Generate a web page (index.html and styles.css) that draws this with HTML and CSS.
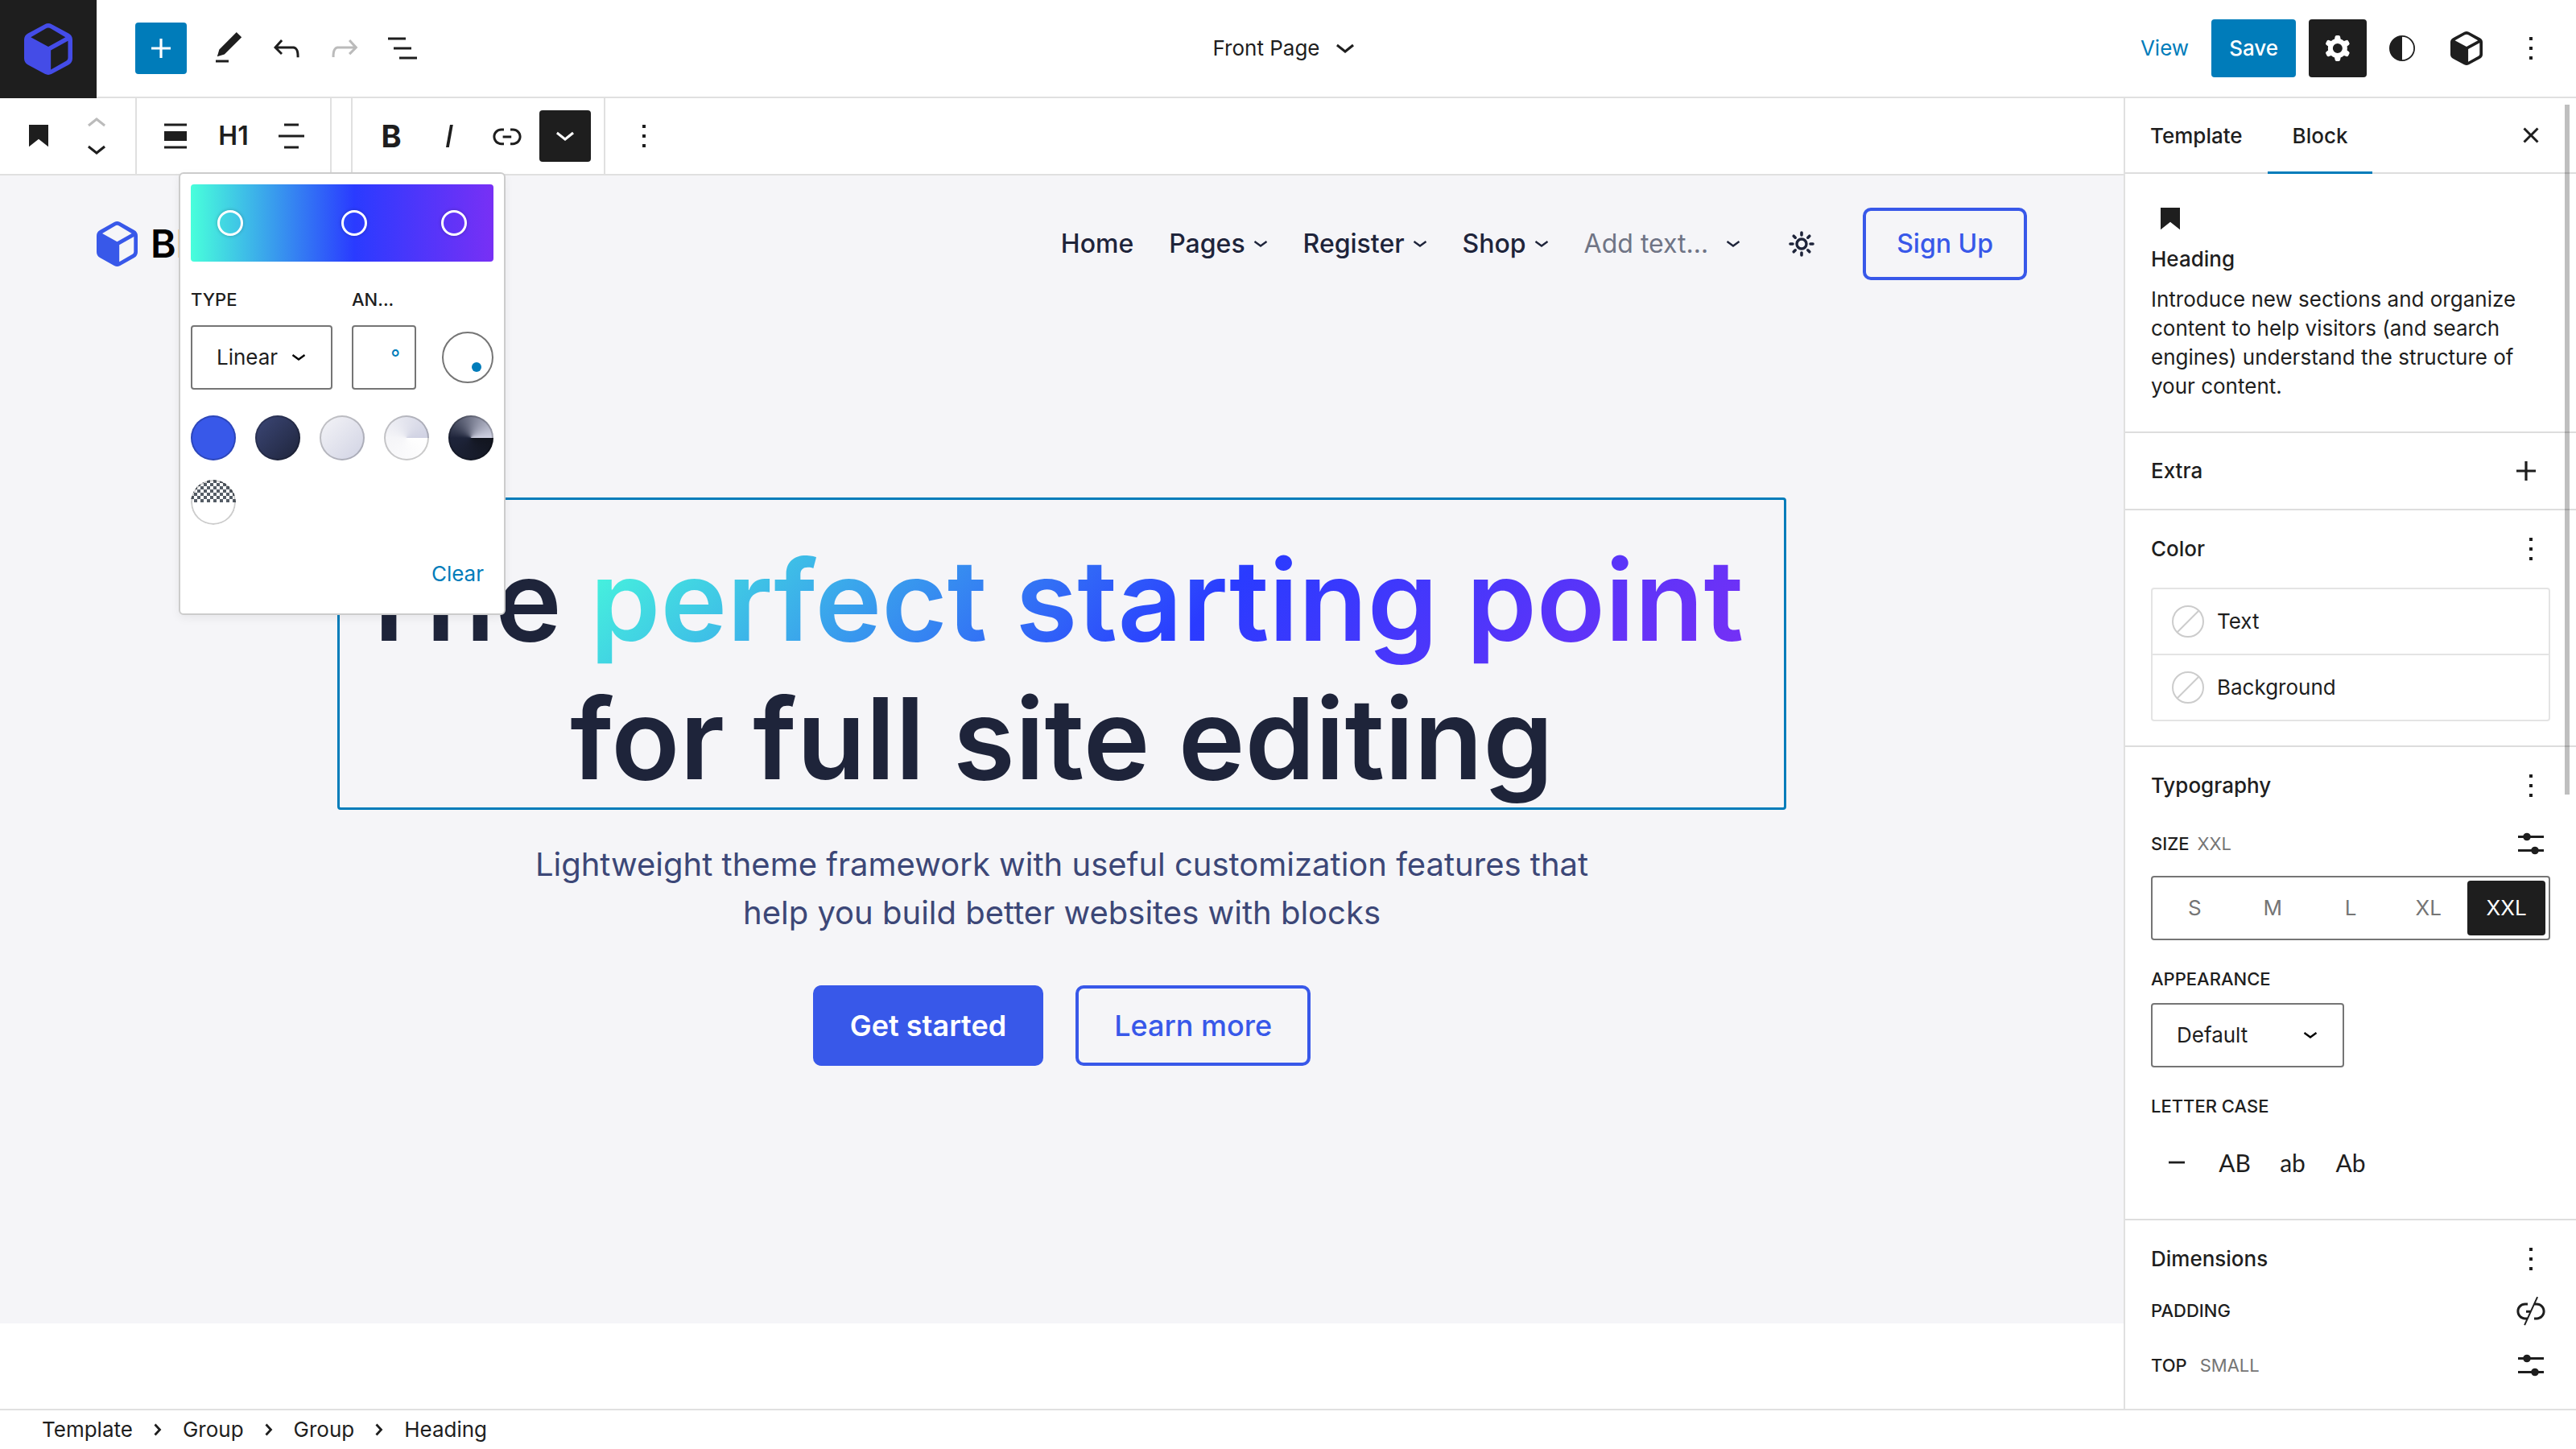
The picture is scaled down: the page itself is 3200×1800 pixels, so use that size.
FILE: index.html
```html
<!DOCTYPE html>
<html lang="en">
<head>
<meta charset="utf-8">
<meta name="viewport" content="width=device-width, initial-scale=1">
<title>Front Page – Editor</title>
<link rel="stylesheet" href="styles.css">
</head>
<body>
<svg class="sprite" aria-hidden="true">
  <symbol id="cube" viewBox="0 0 152 168" preserveAspectRatio="none"><path fill-rule="evenodd" d="M65 3Q76-3 87 3L140 33Q152 40 152 54V114Q152 128 140 135L87 165Q76 171 65 165L12 135Q0 128 0 114V54Q0 40 12 33ZM21 45L76 76L130 45L84 17Q76 12 68 17ZM84 88V151L133 122Q138 119 138 113V57Z"/></symbol>
  <symbol id="plus" viewBox="0 0 24 24"><path d="M18 11.2h-5.2V6h-1.6v5.2H6v1.6h5.2V18h1.6v-5.2H18z"/></symbol>
  <symbol id="pencil" viewBox="0 0 24 24"><path d="M20.1 5.1L16.9 2 6.2 12.7l-1.3 4.4 4.5-1.3L20.1 5.1zM4 20.8h8v-1.5H4v1.5z"/></symbol>
  <symbol id="undo" viewBox="0 0 24 24"><path d="M18.3 11.7c-.6-.6-1.4-.9-2.3-.9H6.7l2.9-3.3-1.1-1-4.5 5L8.5 16l1-1-2.7-2.7H16c.5 0 .9.2 1.3.5 1 1 1 3.4 1 4.5v.3h1.5v-.2c0-1.5 0-4.3-1.5-5.7z"/></symbol>
  <symbol id="redo" viewBox="0 0 24 24"><path d="M15.6 6.5l-1.1 1 2.9 3.3H8c-.9 0-1.7.3-2.3.9-1.4 1.5-1.4 4.2-1.4 5.6v.2h1.5v-.3c0-1.1 0-3.5 1-4.5.3-.3.7-.5 1.3-.5h9.2L14.5 15l1.1 1.1 4.6-4.6-4.6-5z"/></symbol>
  <symbol id="list" viewBox="0 0 24 24"><path d="M3 5.2h11v1.6H3zM6.500 11.200h11v1.600h-11zM10 17.200h11v1.600H10z"/></symbol>
  <symbol id="bookmark" viewBox="0 0 24 24"><path d="M6 5v13.600l6-4.700 6 4.700V5z"/></symbol>
  <symbol id="down" viewBox="0 0 22 12"><path d="M22 3.200L11 12 0 3.200 1.800.8 11 8 20 .8z"/></symbol>
  <symbol id="up" viewBox="0 0 22 12"><path d="M0 8.800L11 0l11 8.800-1.800 2.400L11 4 2 11.200z"/></symbol>
  <symbol id="align" viewBox="0 0 24 24"><path d="M5 4.200h14v1.600H5zM5 9h14v6H5zM5 18.200h14v1.600H5z"/></symbol>
  <symbol id="center" viewBox="0 0 24 24"><path d="M7.500 4.200h9v1.600h-9zM4 11.200h16v1.600H4zM7.500 18.200h9v1.600h-9z"/></symbol>
  <symbol id="slant" viewBox="0 0 24 24"><path d="M12.500 5L10 19h1.900l2.500-14z"/></symbol>
  <symbol id="link" viewBox="0 0 24 24"><path d="M15.600 7.200H14v1.500h1.600c2 0 3.700 1.700 3.700 3.700s-1.700 3.700-3.700 3.700H14v1.500h1.600c2.800 0 5.200-2.300 5.200-5.200 0-2.900-2.300-5.200-5.200-5.200zM4.700 12.400c0-2 1.700-3.700 3.700-3.700H10V7.200H8.400c-2.900 0-5.200 2.300-5.200 5.200 0 2.900 2.300 5.200 5.200 5.200H10v-1.500H8.400c-2 0-3.700-1.700-3.700-3.700zm4.600.9h5.300v-1.500H9.300v1.500z"/></symbol>
  <symbol id="unlink" viewBox="0 0 24 24"><path d="M15.600 7.300h-.7l1.600-3.500-.9-.4-3.900 8.500H9v1.500h2l-1.300 2.800H8.400c-2 0-3.700-1.700-3.700-3.700s1.700-3.700 3.700-3.700H10V7.300H8.400c-2.900 0-5.200 2.300-5.200 5.200 0 2.900 2.300 5.200 5.200 5.200H9l-1.400 3.200.9.400 5.700-12.500h1.400c2 0 3.700 1.700 3.700 3.700s-1.700 3.700-3.700 3.700H14v1.500h1.600c2.900 0 5.200-2.300 5.200-5.200 0-2.900-2.400-5.200-5.200-5.200z"/></symbol>
  <symbol id="more" viewBox="0 0 24 24"><path d="M13 19h-2v-2h2v2zm0-6h-2v-2h2v2zm0-6h-2V5h2v2z"/></symbol>
  <symbol id="cog" viewBox="0 0 24 24"><path fill-rule="evenodd" d="M10.289 4.836A1 1 0 0111.275 4h1.306a1 1 0 01.987.836l.244 1.466c.787.26 1.503.679 2.108 1.218l1.393-.522a1 1 0 011.216.437l.653 1.130a1 1 0 01-.23 1.273l-1.148.944a6.025 6.025 0 010 2.435l1.149.946a1 1 0 01.23 1.272l-.653 1.130a1 1 0 01-1.216.437l-1.394-.522c-.605.540-1.320.958-2.108 1.218l-.244 1.466a1 1 0 01-.987.836h-1.306a1 1 0 01-.986-.836l-.244-1.466a5.995 5.995 0 01-2.108-1.218l-1.394.522a1 1 0 01-1.217-.436l-.653-1.131a1 1 0 01.23-1.272l1.149-.946a6.026 6.026 0 010-2.435l-1.148-.944a1 1 0 01-.23-1.272l.653-1.131a1 1 0 011.217-.437l1.393.522a5.994 5.994 0 012.108-1.218l.244-1.466zM14.929 12a3 3 0 11-6 0 3 3 0 016 0z"/></symbol>
  <symbol id="contrast" viewBox="0 0 24 24"><path fill-rule="evenodd" d="M12 4a8 8 0 100 16 8 8 0 000-16zm0 .9a7.100 7.100 0 010 14.200z"/></symbol>
  <symbol id="close" viewBox="0 0 24 24"><path d="M12 13.060l3.712 3.713 1.061-1.060L13.061 12l3.712-3.712-1.060-1.060L12 10.938 8.288 7.227l-1.061 1.060L10.939 12l-3.712 3.712 1.060 1.061L12 13.061z"/></symbol>
  <symbol id="sliders" viewBox="0 0 24 24"><path d="M4 7h16v1.500H4zM4 15.500h16V17H4z"/><circle cx="9.500" cy="7.750" r="2.400"/><circle cx="14.500" cy="16.250" r="2.400"/></symbol>
  <symbol id="dash" viewBox="0 0 24 24"><path d="M7 11.300h10v1.400H7z"/></symbol>
  <symbol id="caret" viewBox="0 0 18 10"><path d="M1.500 2l7.500 5.500L16.500 2" fill="none" stroke="currentColor" stroke-width="2.400"/></symbol>
  <symbol id="next" viewBox="0 0 10 16"><path d="M1.500 1.500L7.500 8l-6 6.500" fill="none" stroke="currentColor" stroke-width="2.800"/></symbol>
  <symbol id="sun" viewBox="0 0 32 32"><g fill="none" stroke="currentColor"><circle cx="16" cy="16" r="6" stroke-width="3.400"/><path stroke-width="3.600" stroke-linecap="round" d="M16 2v3M16 27v3M2 16h3M27 16h3M6.200 6.200l2 2M23.800 23.800l2 2M6.200 25.800l2-2M23.800 8.200l2-2"/></g></symbol>
</svg>

<header class="topbar">
  <a class="home-link" href="#" aria-label="Back to dashboard"><svg><use href="#cube"/></svg></a>
  <div class="top-tools">
    <button class="inserter" aria-label="Add block"><svg class="icon"><use href="#plus"/></svg></button>
    <div class="top-actions">
      <button class="tool" aria-label="Tools"><svg class="icon"><use href="#pencil"/></svg></button>
      <button class="tool" aria-label="Undo"><svg class="icon"><use href="#undo"/></svg></button>
      <button class="tool muted" aria-label="Redo"><svg class="icon"><use href="#redo"/></svg></button>
      <button class="tool" aria-label="List view"><svg class="icon"><use href="#list"/></svg></button>
    </div>
  </div>
  <button class="doc-title">Front Page <svg class="chev"><use href="#down"/></svg></button>
  <div class="top-settings">
    <a class="view" href="#">View</a>
    <button class="save">Save</button>
    <div class="setting-icons">
      <button class="setting active" aria-label="Settings"><svg class="icon"><use href="#cog"/></svg></button>
      <button class="setting" aria-label="Styles"><svg class="icon"><use href="#contrast"/></svg></button>
      <button class="setting" aria-label="Blockify"><svg class="cube-small"><use href="#cube"/></svg></button>
      <button class="setting" aria-label="Options"><svg class="icon"><use href="#more"/></svg></button>
    </div>
  </div>
</header>

<div class="body">
  <main class="editor">
    <div class="toolbar">
      <div class="group">
        <button class="cell" aria-label="Heading"><svg class="icon"><use href="#bookmark"/></svg></button>
        <div class="movers">
          <button class="muted" aria-label="Move up"><svg class="chev"><use href="#up"/></svg></button>
          <button aria-label="Move down"><svg class="chev"><use href="#down"/></svg></button>
        </div>
      </div>
      <div class="group">
        <button class="cell" aria-label="Align"><svg class="icon"><use href="#align"/></svg></button>
        <button class="cell level">H1</button>
        <button class="cell" aria-label="Align text"><svg class="icon"><use href="#center"/></svg></button>
      </div>
      <div class="group spacer"></div>
      <div class="group">
        <button class="cell bold">B</button>
        <button class="cell" aria-label="Italic"><svg class="icon"><use href="#slant"/></svg></button>
        <button class="cell" aria-label="Link"><svg class="icon"><use href="#link"/></svg></button>
        <button class="cell" aria-label="More formatting"><span class="pressed"><svg class="chev"><use href="#down"/></svg></span></button>
      </div>
      <div class="group last">
        <button class="cell" aria-label="Options"><svg class="icon"><use href="#more"/></svg></button>
      </div>
    </div>

    <div class="canvas">
      <div class="site-header">
        <a class="brand" href="#"><svg><use href="#cube"/></svg>Blockify</a>
        <nav class="nav">
          <a href="#">Home</a>
          <a href="#">Pages<svg class="caret"><use href="#caret"/></svg></a>
          <a href="#">Register<svg class="caret"><use href="#caret"/></svg></a>
          <a href="#">Shop<svg class="caret"><use href="#caret"/></svg></a>
          <a class="placeholder" href="#">Add text…<svg class="caret"><use href="#caret"/></svg></a>
        </nav>
        <button class="mode" aria-label="Toggle dark mode"><svg><use href="#sun"/></svg></button>
        <a class="signup" href="#">Sign Up</a>
      </div>
      <section class="hero">
        <h1>The <span class="gradient-text">perfect starting point</span> for full site editing</h1>
        <p>Lightweight theme framework with useful customization features that help you build better websites with blocks</p>
        <div class="cta">
          <a class="primary" href="#">Get started</a>
          <a class="outline" href="#">Learn more</a>
        </div>
      </section>
    </div>

    <div class="popover" role="dialog" aria-label="Gradient">
      <div class="gradient-bar">
        <button class="stop" style="left:13%" aria-label="Stop 13%"></button>
        <button class="stop" style="left:54%" aria-label="Stop 54%"></button>
        <button class="stop" style="left:87%" aria-label="Stop 87%"></button>
      </div>
      <div class="gradient-fields">
        <label class="label" for="gtype">TYPE</label>
        <label class="label angle-label" for="gangle">AN...</label>
        <div class="select">
          <select id="gtype"><option>Linear</option></select>
          <svg class="caret"><use href="#caret"/></svg>
        </div>
        <div class="angle"><input id="gangle" type="text"><span>°</span></div>
        <button class="dial" aria-label="Angle"><span></span></button>
      </div>
      <div class="swatches">
        <button class="swatch s1" aria-label="Blue"></button>
        <button class="swatch s2" aria-label="Navy"></button>
        <button class="swatch s3" aria-label="Light"></button>
        <button class="swatch s4" aria-label="Light cone"></button>
        <button class="swatch s5" aria-label="Dark cone"></button>
        <button class="swatch s6" aria-label="Transparent"></button>
      </div>
      <button class="clear">Clear</button>
    </div>
  </main>

  <aside class="sidebar">
    <div class="tabs">
      <button class="tab">Template</button>
      <button class="tab current">Block</button>
      <button class="icon-btn close" aria-label="Close"><svg class="icon"><use href="#close"/></svg></button>
    </div>
    <section class="card">
      <svg class="icon"><use href="#bookmark"/></svg>
      <h2>Heading</h2>
      <p>Introduce new sections and organize content to help visitors (and search engines) understand the structure of your content.</p>
    </section>
    <section class="panel">
      <button class="panel-toggle">Extra <svg class="icon"><use href="#plus"/></svg></button>
    </section>
    <section class="panel color">
      <div class="panel-head"><h2>Color</h2><button class="icon-btn" aria-label="Color options"><svg class="icon"><use href="#more"/></svg></button></div>
      <div class="color-list">
        <button><svg class="none" viewBox="0 0 40 40"><circle cx="20" cy="20" r="19"/><path d="M6.500 33.500l27-27"/></svg>Text</button>
        <button><svg class="none" viewBox="0 0 40 40"><circle cx="20" cy="20" r="19"/><path d="M6.500 33.500l27-27"/></svg>Background</button>
      </div>
    </section>
    <section class="panel typography">
      <div class="panel-head"><h2>Typography</h2><button class="icon-btn" aria-label="Typography options"><svg class="icon"><use href="#more"/></svg></button></div>
      <div class="row size-row"><span class="label">SIZE <span class="hint">XXL</span></span><button class="icon-btn" aria-label="Custom size"><svg class="icon"><use href="#sliders"/></svg></button></div>
      <div class="segmented">
        <button>S</button><button>M</button><button>L</button><button>XL</button><button class="on">XXL</button>
      </div>
      <div class="field">
        <label class="label" for="appearance">APPEARANCE</label>
        <div class="select wide">
          <select id="appearance"><option>Default</option></select>
          <svg class="caret"><use href="#caret"/></svg>
        </div>
      </div>
      <div class="field">
        <span class="label">LETTER CASE</span>
        <div class="cases">
          <button aria-label="None"><svg class="icon"><use href="#dash"/></svg></button>
          <button>AB</button>
          <button>ab</button>
          <button>Ab</button>
        </div>
      </div>
    </section>
    <section class="panel dimensions">
      <div class="panel-head"><h2>Dimensions</h2><button class="icon-btn" aria-label="Dimensions options"><svg class="icon"><use href="#more"/></svg></button></div>
      <div class="row"><span class="label">PADDING</span><button class="icon-btn" aria-label="Unlink sides"><svg class="icon"><use href="#unlink"/></svg></button></div>
      <div class="row"><span class="label spaced">TOP <span class="hint">SMALL</span></span><button class="icon-btn" aria-label="Custom padding"><svg class="icon"><use href="#sliders"/></svg></button></div>
    </section>
    <div class="scroll-thumb"></div>
  </aside>
</div>

<footer class="breadcrumb">
  <a href="#">Template</a><svg><use href="#next"/></svg>
  <a href="#">Group</a><svg><use href="#next"/></svg>
  <a href="#">Group</a><svg><use href="#next"/></svg>
  <a href="#">Heading</a>
</footer>
</body>
</html>
```
FILE: styles.css
```css
:root {
  --ink: #1e1e1e;
  --admin: #007cba;
  --line: #e0e0e0;
  --gray: #757575;
  --navy: #1e243a;
  --blue: #3858e9;
}

* { box-sizing: border-box; }

body {
  margin: 0;
  height: 100vh;
  display: flex;
  flex-direction: column;
  background: #fff;
  color: var(--ink);
  font: 400 26px/36px Inter, sans-serif;
}

h1, h2, p { margin: 0; }
a { color: inherit; text-decoration: none; }

button {
  margin: 0;
  padding: 0;
  border: 0;
  background: none;
  color: inherit;
  font: inherit;
  display: flex;
  align-items: center;
  justify-content: center;
}

svg { display: block; flex: none; fill: currentColor; }
.sprite { position: absolute; width: 0; height: 0; }
.icon { width: 48px; height: 48px; }
.chev { width: 22px; height: 12px; }
.caret { width: 18px; height: 10px; }
.muted { color: #bbb; }

/* Top bar */
.topbar {
  display: grid;
  grid-template-columns: auto 1fr auto 1fr;
  align-items: center;
  height: 122px;
  flex: none;
  position: relative;
  border-bottom: 2px solid var(--line);
}
.home-link {
  width: 120px;
  height: 122px;
  margin-bottom: -2px;
  display: grid;
  place-items: center;
  background: var(--ink);
  color: #444ce7;
}
.home-link svg { width: 60px; height: 64px; }
.top-tools { display: flex; align-items: center; gap: 20px; padding-left: 48px; }
.top-actions { display: flex; gap: 8px; }
.tool, .inserter { width: 64px; height: 64px; border-radius: 4px; }
.inserter { background: var(--admin); color: #fff; }
.doc-title { gap: 20px; margin-right: 132px; }
.top-settings { display: flex; align-items: center; justify-content: flex-end; gap: 16px; padding-right: 20px; }
.view { color: var(--admin); padding: 0 12px; }
.save {
  height: 72px;
  padding: 0 22px;
  border-radius: 4px;
  background: var(--admin);
  color: #fff;
  font-weight: 500;
}
.setting-icons { display: flex; gap: 8px; }
.setting { width: 72px; height: 72px; border-radius: 4px; }
.setting.active { background: var(--ink); color: #fff; }
.cube-small { width: 40px; height: 42px; }

/* Body split */
.body { flex: 1; min-height: 0; display: flex; }
.editor { flex: 1; min-width: 0; position: relative; overflow: hidden; }

/* Block toolbar */
.toolbar { display: flex; height: 96px; border-bottom: 2px solid var(--line); }
.group { display: flex; padding: 0 12px; border-right: 2px solid var(--line); }
.group.spacer { width: 26px; padding: 0; }
.group.last { border: 0; }
.cell { width: 72px; }
.level { font-size: 32px; font-weight: 600; }
.bold { font-size: 38px; font-weight: 700; }
.movers { width: 72px; display: flex; flex-direction: column; justify-content: center; gap: 22px; }
.pressed {
  width: 64px;
  height: 64px;
  display: grid;
  place-items: center;
  border-radius: 4px;
  background: var(--ink);
  color: #fff;
}

/* Site canvas */
.canvas { background: #f5f5f8; color: var(--navy); }
.site-header { display: flex; align-items: center; gap: 60px; padding: 40px 120px; }
.brand { display: flex; align-items: center; gap: 16px; margin-right: auto; color: #000; font-size: 48px; font-weight: 600; }
.brand svg { width: 51px; height: 56px; color: var(--blue); }
.nav { display: flex; gap: 44px; font-size: 32px; font-weight: 500; }
.nav a { display: flex; align-items: center; gap: 10px; }
.nav .placeholder { gap: 22px; color: #6f7485; font-weight: 400; }
.placeholder .caret { color: var(--navy); }
.mode svg { width: 32px; height: 32px; }
.signup, .outline { border: 4px solid var(--blue); color: var(--blue); }
.signup {
  height: 90px;
  padding: 0 38px;
  display: flex;
  align-items: center;
  border-radius: 10px;
  font-size: 32px;
  font-weight: 500;
}
.hero { padding: 230px 120px 320px; text-align: center; }
/* break-spaces keeps the typed space at the line end, as the editable field does */
h1 {
  max-width: 1800px;
  margin: 0 auto 38px;
  padding: 38px 0 0;
  border: 3px solid var(--admin);
  border-radius: 4px;
  font-size: 140px;
  line-height: 172px;
  font-weight: 600;
  white-space: break-spaces;
}
.gradient-text {
  background: linear-gradient(135deg, #48ffdb 0%, #2a3bff 54%, #7830f5 100%);
  -webkit-background-clip: text;
  background-clip: text;
  color: transparent;
}
.hero p { max-width: 1360px; margin: 0 auto 60px; font-size: 40px; line-height: 60px; color: #3c4777; }
.cta { display: flex; justify-content: center; gap: 40px; font-size: 36px; font-weight: 500; }
.cta a { height: 100px; padding: 0 44px; display: flex; align-items: center; border-radius: 10px; }
.cta .primary { padding: 0 46px; background: var(--blue); color: #fff; font-weight: 600; }

/* Gradient popover */
.popover {
  position: absolute;
  top: 92px;
  left: 222px;
  width: 406px;
  padding: 13px;
  border: 2px solid #ccc;
  border-radius: 6px;
  background: #fff;
  box-shadow: 0 4px 12px rgba(0, 0, 0, .06);
}
.gradient-bar {
  position: relative;
  height: 96px;
  border-radius: 4px;
  background: linear-gradient(90deg, #48ffdb 0%, #2a3bff 54%, #7830f5 100%);
}
.stop {
  position: absolute;
  top: 32px;
  width: 32px;
  height: 32px;
  margin-left: -16px;
  border: 3px solid #fff;
  border-radius: 50%;
  box-shadow: 0 0 4px rgba(0, 0, 0, .25);
}
.label { font-size: 22px; line-height: 32px; font-weight: 500; color: var(--ink); }
.hint { margin-left: 4px; color: var(--gray); font-weight: 400; }
.gradient-fields {
  display: grid;
  grid-template-columns: 176px 80px 64px;
  gap: 16px 24px;
  justify-content: start;
  align-items: center;
  margin-top: 31px;
}
.angle-label { grid-column: 2 / 4; }
.dial {
  width: 64px;
  height: 64px;
  margin-left: 8px;
  border: 2px solid var(--gray);
  border-radius: 50%;
  padding: 24px 0 0 22px;
}
.dial span { width: 12px; height: 12px; border-radius: 50%; background: var(--admin); }
.select { display: grid; grid-template-columns: 1fr; align-items: center; }
.select select, .select svg { grid-area: 1 / 1; }
.select svg { justify-self: end; margin-right: 33px; color: #000; pointer-events: none; }
.select select {
  appearance: none;
  width: 100%;
  height: 80px;
  padding: 0 30px;
  border: 2px solid var(--gray);
  border-radius: 4px;
  background: #fff;
  color: var(--ink);
  font: inherit;
}
.angle {
  height: 80px;
  display: flex;
  align-items: center;
  padding-right: 18px;
  border: 2px solid var(--gray);
  border-radius: 4px;
  color: var(--admin);
}
.angle input { flex: 1; min-width: 0; width: 0; border: 0; padding: 0; outline: 0; font: inherit; }
.swatches { display: flex; flex-wrap: wrap; gap: 24px; margin-top: 32px; }
.swatch { width: 56px; height: 56px; border-radius: 50%; box-shadow: inset 0 0 0 2px rgba(0, 0, 0, .2); }
.s1 { background: #3858e9; }
.s2 { background: linear-gradient(135deg, #3c4777, #1e243a); }
.s3 { background: linear-gradient(135deg, #f5f5f8, #d0d2e3); }
.s4 { background: conic-gradient(from 90deg, #fff, #f5f5f8 50%, #d0d2e3); }
.s5 { background: conic-gradient(from 90deg, #12151f, #1e243a 50%, #d0d2e3); }
.s6 { background: linear-gradient(#fff, #fff) 0 28px no-repeat, repeating-conic-gradient(#555d66 0 25%, #fff 0 50%) 0 0 / 8px 8px; }
.clear { height: 64px; margin: 29px 0 4px auto; padding: 0 12px; color: var(--admin); }

/* Settings sidebar */
.sidebar { position: relative; flex: none; width: 562px; border-left: 2px solid var(--line); overflow: hidden; }
.tabs { display: flex; height: 94px; border-bottom: 2px solid #ddd; }
.tab { padding: 3px 31px 0; margin-bottom: -2px; border-bottom: 3px solid transparent; font-weight: 500; }
.tab.current { border-color: var(--admin); }
.icon-btn { width: 48px; height: 48px; }
.close { margin: auto 32px auto auto; }
h2 { font-size: 26px; line-height: 36px; font-weight: 500; }
.card { padding: 32px 32px 38px; border-bottom: 2px solid #ddd; }
.card h2 { margin: 8px 0 14px; }
.panel { padding: 0 32px; border-bottom: 2px solid #ddd; }
.panel:last-of-type { border: 0; }
.panel-toggle { width: 100%; height: 94px; padding-right: 6px; justify-content: space-between; font-weight: 500; }
.panel-head { height: 96px; display: flex; align-items: center; justify-content: space-between; }
.color { padding-bottom: 30px; }
.color-list { border: 2px solid #e4e4e4; border-radius: 4px; }
.color-list button { width: 100%; height: 80px; gap: 16px; padding: 0 24px; justify-content: flex-start; }
.color-list button + button { height: 82px; border-top: 2px solid #e4e4e4; }
.none { width: 40px; height: 40px; fill: none; stroke: #ccc; stroke-width: 2; }
.row { display: flex; align-items: center; justify-content: space-between; height: 32px; }
.row + .row { margin-top: 36px; }
.size-row { height: 48px; margin-bottom: 16px; }
.label.spaced { display: flex; gap: 12px; }
.segmented {
  display: grid;
  grid-template-columns: repeat(5, 1fr);
  height: 80px;
  padding: 4px;
  border: 2px solid var(--gray);
  border-radius: 4px;
  color: var(--gray);
}
.segmented .on { border-radius: 4px; background: var(--ink); color: #fff; }
.field { display: flex; flex-direction: column; margin-top: 32px; }
.wide { width: 240px; margin-top: 14px; }
.cases { display: flex; gap: 8px; margin-top: 22px; font: 400 30px/36px Lato, sans-serif; }
.cases button { width: 64px; height: 64px; }
.typography { padding-bottom: 38px; }
.dimensions .row .icon-btn { margin: -8px 0; }
.scroll-thumb { position: absolute; top: 8px; right: 8px; width: 6px; height: 857px; background: rgba(0, 0, 0, .25); }

/* Breadcrumb */
.breadcrumb {
  flex: none;
  display: flex;
  align-items: center;
  gap: 26px;
  height: 50px;
  padding: 0 52px;
  border-top: 2px solid var(--line);
}
.breadcrumb svg { width: 10px; height: 16px; }
```
